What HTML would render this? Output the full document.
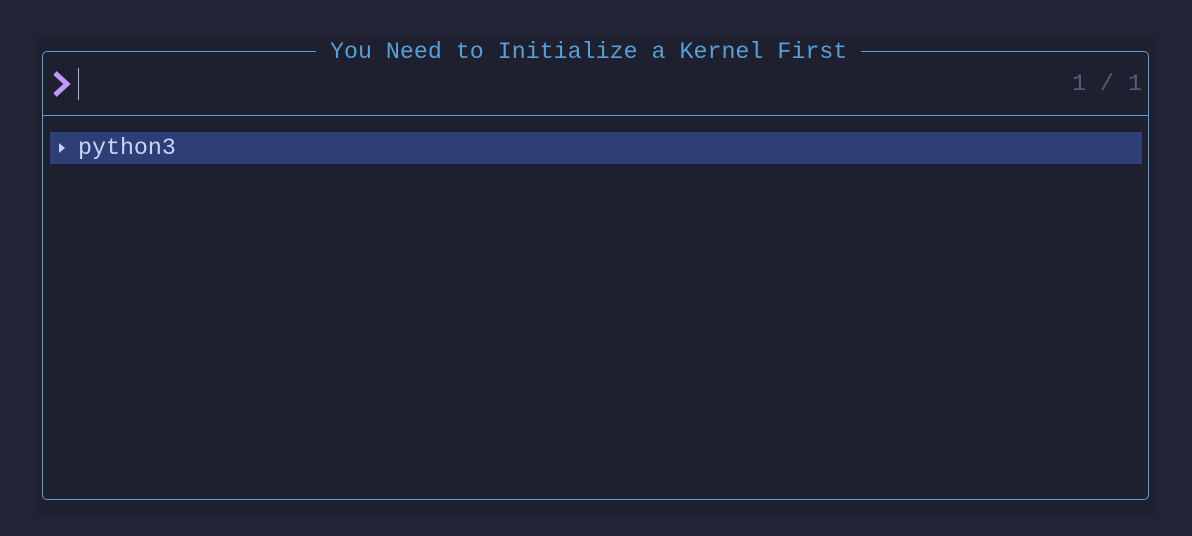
<!DOCTYPE html>
<html><head><meta charset="utf-8"><style>
html,body{margin:0;padding:0;width:1192px;height:536px;background:#222436;overflow:hidden;font-family:"Liberation Mono",monospace;}
.panel{position:absolute;left:36px;top:36px;width:1120px;height:480px;background:#1e2030;}
.box{position:absolute;left:42px;top:51px;width:1105px;height:447px;border:1px solid #589ed7;border-radius:5px;}
.title{position:absolute;top:37px;left:316px;padding:0 14px;background:#1e2030;color:#589ed7;font-size:23.3px;line-height:30px;white-space:pre;}
.sep{position:absolute;left:43px;top:115px;width:1105px;height:1px;background:#589ed7;}
.prompt{position:absolute;left:52px;top:70px;}
.cursor{position:absolute;left:78px;top:68px;width:1px;height:32px;background:#a9b1d6;}
.count{position:absolute;right:50px;top:68px;color:#545c7e;font-size:23.3px;line-height:32px;white-space:pre;}
.sel{position:absolute;left:50px;top:132px;width:1092px;height:32px;background:#2d3f76;}
.sel .tri{position:absolute;left:9px;top:11px;width:0;height:0;border-left:6px solid #c8d3f5;border-top:5px solid transparent;border-bottom:5px solid transparent;}
.sel .txt{position:absolute;left:28px;top:0;color:#c8d3f5;font-size:23.3px;line-height:32px;}
</style></head><body>
<div class="panel"></div>
<div class="box"></div>
<div class="title">You Need to Initialize a Kernel First</div>
<div class="sep"></div>
<svg class="prompt" width="20" height="28" viewBox="0 0 20 28"><path d="M3 3 L15 14 L3 25" fill="none" stroke="#c099ff" stroke-width="5" stroke-linejoin="miter"/></svg>
<div class="cursor"></div>
<div class="count">1 / 1</div>
<div class="sel"><div class="tri"></div><div class="txt">python3</div></div>
</body></html>
